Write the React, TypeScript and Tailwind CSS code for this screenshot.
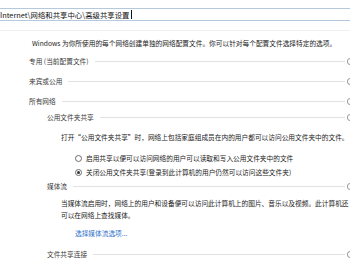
const font = { fontFamily: '"Noto Sans CJK SC", "Noto Sans", sans-serif' };

function Header({ label, indent }: { label: string; indent: string }) {
  return (
    <div className={`flex h-[14px] items-center ${indent}`}>
      <span className="whitespace-nowrap text-[#3a3a3a]">{label}</span>
      <div className="ml-[6px] h-px flex-1 bg-[#e2e2e2]" />
      <div className="ml-[2px] mr-[-3px] h-[7px] w-[6px] rounded-full border border-[#9a9a9a]" />
    </div>
  );
}

function Radio({ checked, label }: { checked?: boolean; label: string }) {
  return (
    <div className="flex h-[14px] items-center pl-[75px]">
      <div className="mr-[4px] flex h-[7px] w-[7px] items-center justify-center rounded-full border border-[#6b6b6b] bg-white">
        {checked && <div className="h-[3px] w-[3px] rounded-full bg-[#333]" />}
      </div>
      <span className="whitespace-nowrap">{label}</span>
    </div>
  );
}

export default function App() {
  return (
    <div
      className="h-[260px] w-[350px] overflow-hidden bg-white text-[6.7px] leading-[14px] text-[#222]"
      style={font}
    >
      <div className="h-[22px] pt-[8px]">
        <div className="flex h-[13px] items-center border-y border-[#b4c8de]">
          <span className="whitespace-nowrap text-[7.4px] text-[#111]">
            Internet\网络和共享中心\高级共享设置
          </span>
          <div className="ml-px h-[9px] w-px bg-[#111]" />
        </div>
      </div>
      <div className="mt-[8px] h-px bg-[#f0f0f0]" />
      <div className="mt-[5px] flex h-[14px] items-center pl-[32px]">
        <span className="whitespace-nowrap">
          Windows 为你所使用的每个网络创建单独的网络配置文件。你可以针对每个配置文件选择特定的选项。
        </span>
      </div>
      <div className="mt-[4px]">
        <Header label="专用 (当前配置文件)" indent="pl-[29px]" />
      </div>
      <div className="mt-[6px]">
        <Header label="来宾或公用" indent="pl-[29px]" />
      </div>
      <div className="mt-[6px]">
        <Header label="所有网络" indent="pl-[29px]" />
      </div>
      <div className="mt-[2px]">
        <Header label="公用文件夹共享" indent="pl-[47px]" />
      </div>
      <div className="mt-[6px] flex h-[14px] items-center pl-[61px]">
        <span className="whitespace-nowrap">
          打开“公用文件夹共享”时，网络上包括家庭组成员在内的用户都可以访问公用文件夹中的文件。
        </span>
      </div>
      <div className="mt-[7px]">
        <Radio label="启用共享以便可以访问网络的用户可以读取和写入公用文件夹中的文件" />
        <Radio checked label="关闭公用文件夹共享(登录到此计算机的用户仍然可以访问这些文件夹)" />
      </div>
      <Header label="媒体流" indent="pl-[47px]" />
      <div className="mt-[4px] pl-[61px] leading-[12px]">
        <div className="whitespace-nowrap">
          当媒体流启用时，网络上的用户和设备便可以访问此计算机上的图片、音乐以及视频。此计算机还
        </div>
        <div className="whitespace-nowrap">可以在网络上查找媒体。</div>
      </div>
      <div className="mt-[5px] flex h-[14px] items-center pl-[75px]">
        <span className="whitespace-nowrap text-[#2f6fc9]">选择媒体流选项...</span>
      </div>
      <div className="mt-[7px]">
        <Header label="文件共享连接" indent="pl-[47px]" />
      </div>
    </div>
  );
}
